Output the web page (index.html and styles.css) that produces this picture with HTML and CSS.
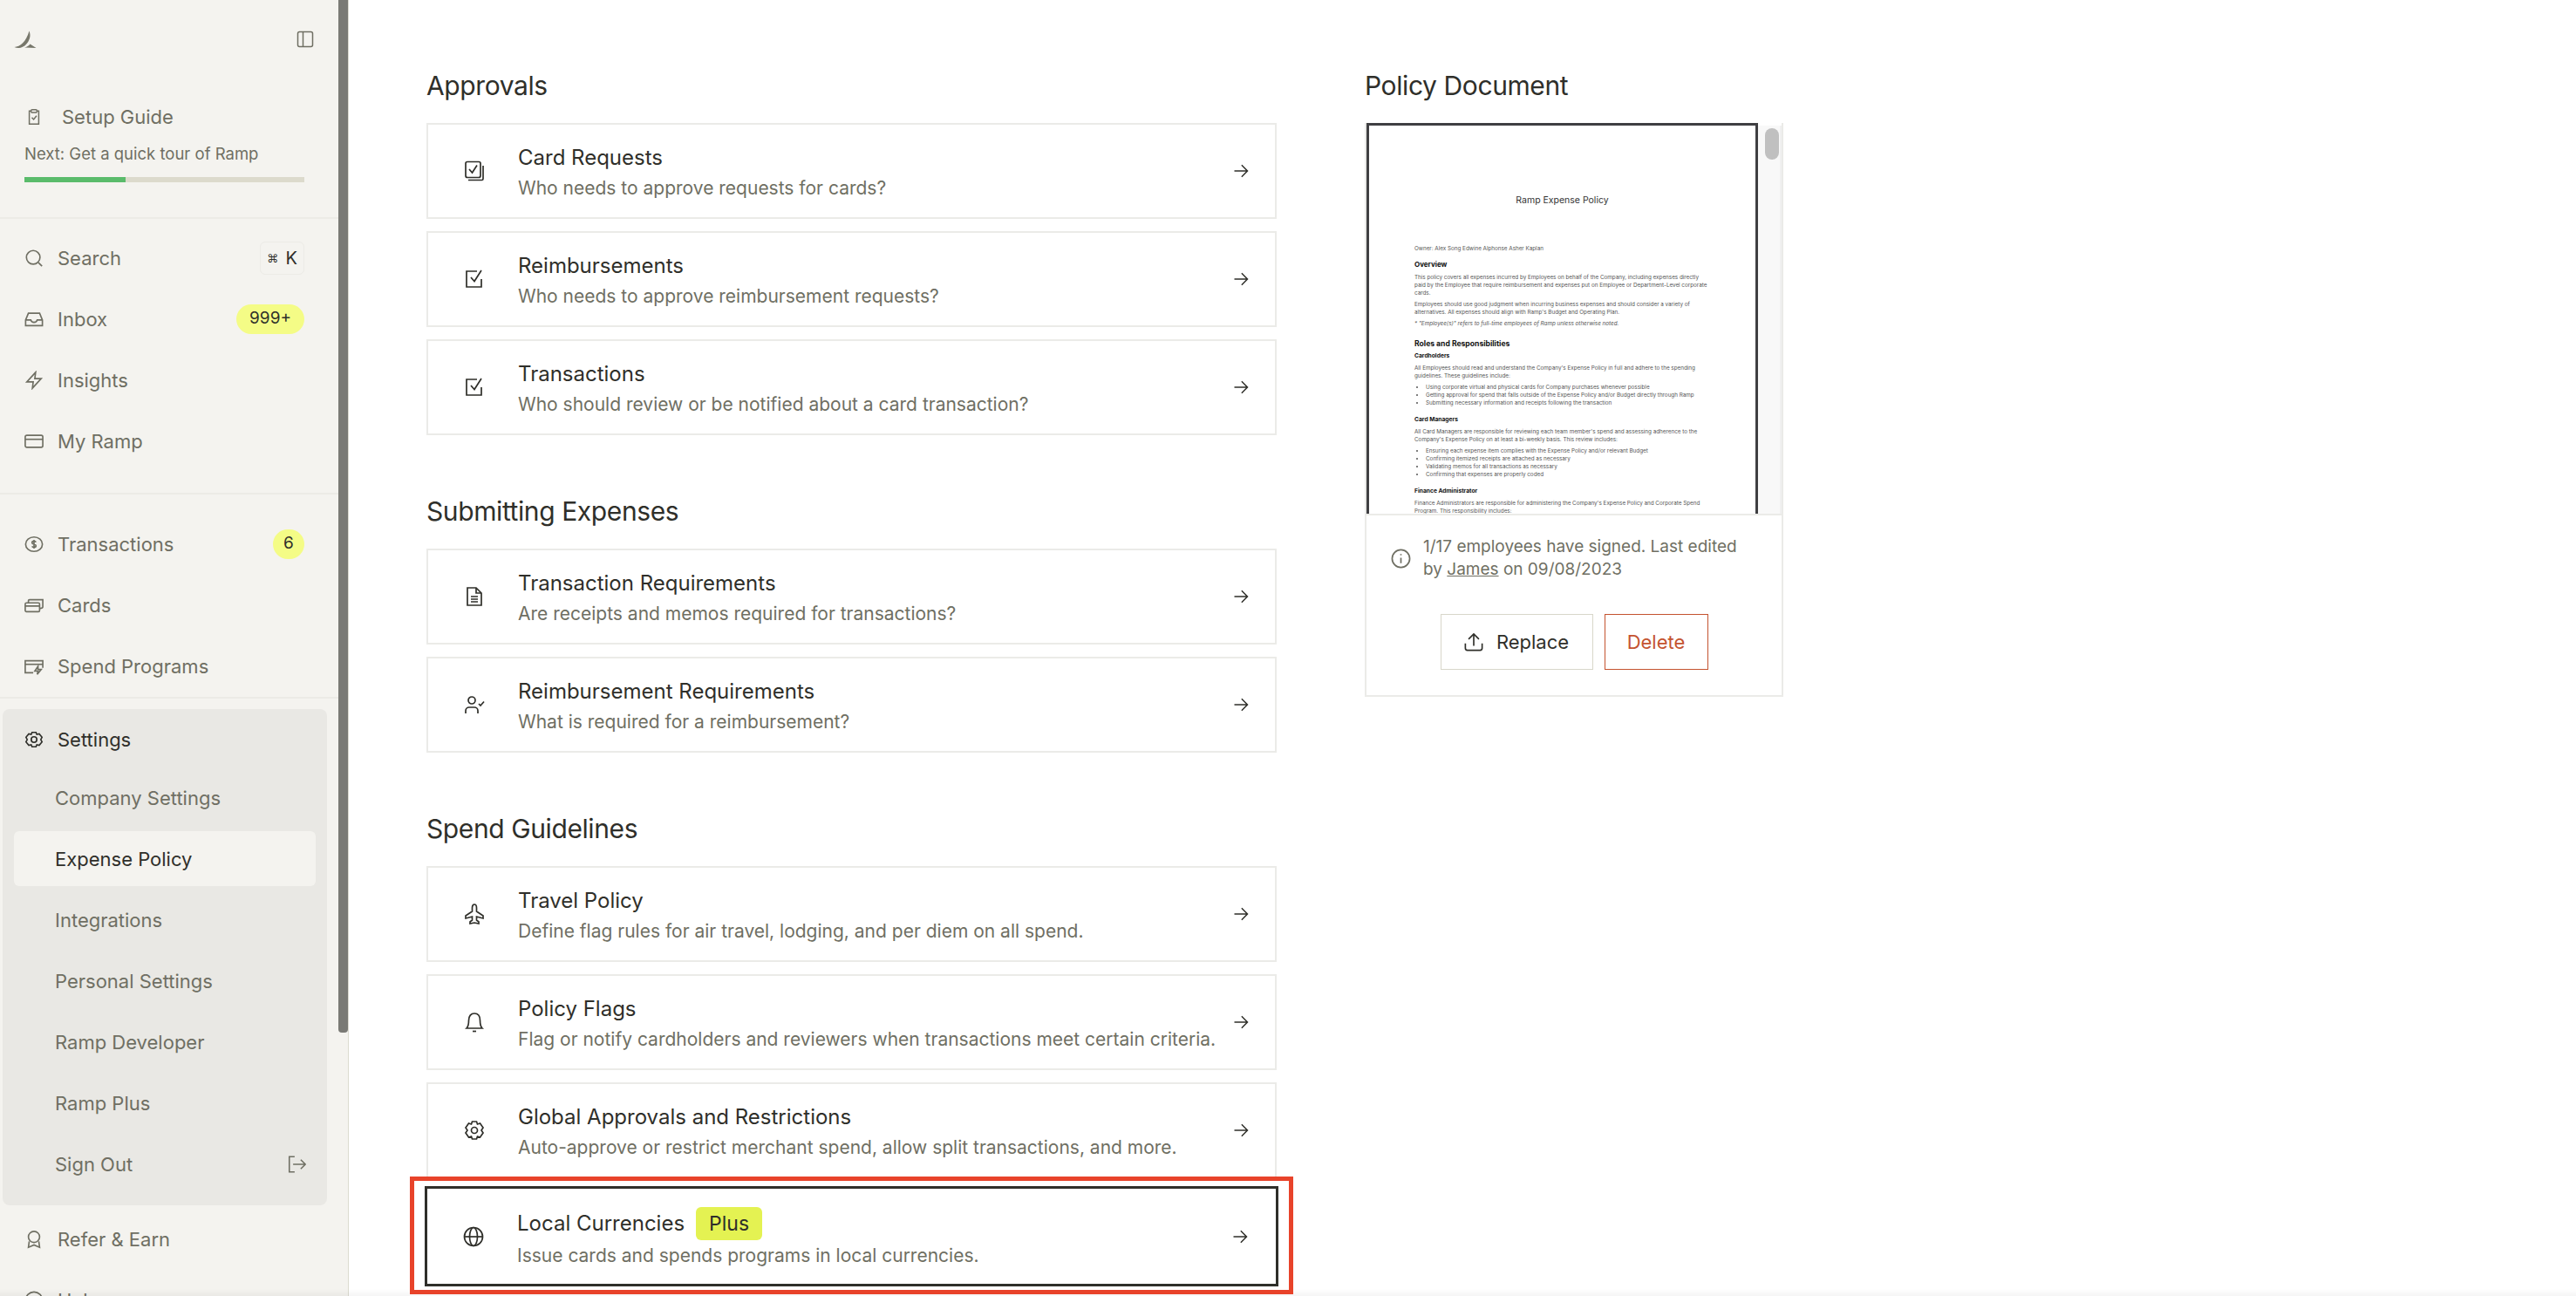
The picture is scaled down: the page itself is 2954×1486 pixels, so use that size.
FILE: index.html
```html
<!DOCTYPE html>
<html lang="en">
<head>
    <meta charset="UTF-8">
    <title>Ramp | Expense Policy</title>
    <link rel="stylesheet" href="styles.css">
</head>
<body>
    <!-- Sidebar -->
    <aside class="sidebar">
        <div class="sidebar-scroll">
            <div class="sidebar-top">
                <svg class="logo" viewBox="0 0 26 22"><path d="M0.5 20C7 19.5 14 14 17.500 1.500C19 5.500 19 9 16.500 13.500C14.500 17 11 20.500 6 21C4 21.200 2 20.800 0.500 20Z" fill="#77776b"/><path d="M12 20.500C14.500 20 17 18.500 18.500 16.500C21 18 23 19.500 25.500 21Z" fill="#77776b"/></svg>
                <svg class="icon collapse-icon" viewBox="0 0 20 20"><rect x="1.500" y="1.500" width="17" height="17" rx="2"/><path d="M7.500 1.500V18.500"/></svg>
            </div>

            <div class="setup">
                <div class="setup-title">
                    <svg class="icon" viewBox="0 0 24 24"><path d="M8 4H5.500V22H18.500V4H16"/><rect x="8" y="2" width="8" height="4" rx="1.500"/><path d="M9 13L11.500 15.500L15.500 10.500"/></svg>
                    <span>Setup Guide</span>
                </div>
                <p class="setup-next">Next: Get a quick tour of Ramp</p>
                <div class="progress"><div class="progress-fill" style="width: 36%"></div></div>
            </div>

            <nav class="nav-group nav-group-first">
                <a class="nav-item">
                    <svg class="icon" viewBox="0 0 24 24"><circle cx="11" cy="11" r="8.500"/><path d="M17.500 17.500L22 22"/></svg>
                    <span>Search</span>
                    <span class="kbd"><span class="kbd-cmd">⌘</span> K</span>
                </a>
                <a class="nav-item">
                    <svg class="icon" viewBox="0 0 24 24"><path d="M1.500 13L5 4.500H19L22.500 13V20H1.500Z"/><path d="M1.500 13H8C8.500 15 10 16 12 16S15.500 15 16 13H22.500"/></svg>
                    <span>Inbox</span>
                    <span class="badge">999+</span>
                </a>
                <a class="nav-item">
                    <svg class="icon" viewBox="0 0 24 24"><path d="M14 2L3 14H11L10 22L21 10H13Z"/></svg>
                    <span>Insights</span>
                </a>
                <a class="nav-item">
                    <svg class="icon" viewBox="0 0 24 24"><rect x="1" y="4.500" width="22" height="15" rx="2"/><path d="M1 9.500H23"/></svg>
                    <span>My Ramp</span>
                </a>
            </nav>

            <nav class="nav-group">
                <a class="nav-item">
                    <svg class="icon" viewBox="0 0 24 24"><ellipse cx="12" cy="12" rx="10.500" ry="9"/><path d="M14.500 9.500C14 8.500 13 8 12 8C10.500 8 9.500 9 9.500 10C9.500 11.200 10.500 11.700 12 12C13.500 12.300 14.500 12.800 14.500 14C14.500 15 13.500 16 12 16C11 16 10 15.500 9.500 14.500M12 6.500V17.500"/></svg>
                    <span>Transactions</span>
                    <span class="badge badge-round">6</span>
                </a>
                <a class="nav-item">
                    <svg class="icon" viewBox="0 0 24 24"><rect x="1" y="9" width="18" height="11" rx="1.500"/><path d="M1 13H19M5 9V6.500C5 5.500 5.500 5 6.500 5H23V14C23 15.500 22 16 19 16"/></svg>
                    <span>Cards</span>
                </a>
                <a class="nav-item">
                    <svg class="icon" viewBox="0 0 24 24"><path d="M11 20H1V5H23V14"/><path d="M1 9.500H23"/><path d="M17 12L13 18H17L16 22L21 16H17Z"/></svg>
                    <span>Spend Programs</span>
                </a>
            </nav>

            <nav class="settings-group">
                <a class="nav-item nav-item-active">
                    <svg class="icon" viewBox="0 0 24 24"><circle cx="12" cy="12" r="3.500"/><path d="M9.500 3H14.500L15.500 5.500L18.500 4.800L22 9L20.500 12L22 15L18.500 19.200L15.500 18.500L14.500 21H9.500L8.500 18.500L5.500 19.200L2 15L3.500 12L2 9L5.500 4.800L8.500 5.500Z"/></svg>
                    <span>Settings</span>
                </a>
                <a class="sub-item">Company Settings</a>
                <a class="sub-item sub-item-current">Expense Policy</a>
                <a class="sub-item">Integrations</a>
                <a class="sub-item">Personal Settings</a>
                <a class="sub-item">Ramp Developer</a>
                <a class="sub-item">Ramp Plus</a>
                <a class="sub-item">
                    <span>Sign Out</span>
                    <svg class="icon signout-icon" viewBox="0 0 24 24"><path d="M9 2H2V22H9"/><path d="M7 12H23M17 6L23 12L17 18"/></svg>
                </a>
            </nav>

            <nav class="nav-group-end">
                <a class="nav-item">
                    <svg class="icon" viewBox="0 0 24 24"><circle cx="12" cy="9" r="7"/><path d="M6 14.500L5 22L12 19L19 22L18 14.500"/></svg>
                    <span>Refer &amp; Earn</span>
                </a>
                <a class="nav-item">
                    <svg class="icon" viewBox="0 0 24 24"><circle cx="12" cy="12" r="10.500"/></svg>
                    <span>Help</span>
                </a>
            </nav>
        </div>
        <div class="scrollbar"><div class="scrollbar-thumb"></div></div>
    </aside>

    <!-- Main Content -->
    <main class="main">
        <div class="policy-col">
            <section class="policy-section">
                <h2 class="section-title">Approvals</h2>
                <div class="card-list">
                    <a class="policy-card">
                        <svg class="icon card-icon" viewBox="0 0 24 24"><rect x="2" y="1.500" width="17" height="18" rx="2"/><path d="M6 10L9.500 14L15 5.500"/><path d="M22 6V21C22 22 21.500 22.500 20.500 22.500H5"/></svg>
                        <div class="card-text">
                            <div class="card-title">Card Requests</div>
                            <div class="card-desc">Who needs to approve requests for cards?</div>
                        </div>
                        <svg class="icon card-arrow" viewBox="0 0 24 24"><path d="M3 12H21M13 4L21 12L13 20"/></svg>
                    </a>
                    <a class="policy-card">
                        <svg class="icon card-icon" viewBox="0 0 24 24"><path d="M20 12V21H3V3H15"/><path d="M8 10L12 14.500L20 2"/></svg>
                        <div class="card-text">
                            <div class="card-title">Reimbursements</div>
                            <div class="card-desc">Who needs to approve reimbursement requests?</div>
                        </div>
                        <svg class="icon card-arrow" viewBox="0 0 24 24"><path d="M3 12H21M13 4L21 12L13 20"/></svg>
                    </a>
                    <a class="policy-card">
                        <svg class="icon card-icon" viewBox="0 0 24 24"><path d="M20 12V21H3V3H15"/><path d="M8 10L12 14.500L20 2"/></svg>
                        <div class="card-text">
                            <div class="card-title">Transactions</div>
                            <div class="card-desc">Who should review or be notified about a card transaction?</div>
                        </div>
                        <svg class="icon card-arrow" viewBox="0 0 24 24"><path d="M3 12H21M13 4L21 12L13 20"/></svg>
                    </a>
                </div>
            </section>

            <section class="policy-section">
                <h2 class="section-title">Submitting Expenses</h2>
                <div class="card-list">
                    <a class="policy-card">
                        <svg class="icon card-icon" viewBox="0 0 24 24"><path d="M4 2H14L20 8V22H4Z"/><path d="M14 2V8H20M8 12H16M8 15H16M8 18H16"/></svg>
                        <div class="card-text">
                            <div class="card-title">Transaction Requirements</div>
                            <div class="card-desc">Are receipts and memos required for transactions?</div>
                        </div>
                        <svg class="icon card-arrow" viewBox="0 0 24 24"><path d="M3 12H21M13 4L21 12L13 20"/></svg>
                    </a>
                    <a class="policy-card">
                        <svg class="icon card-icon" viewBox="0 0 24 24"><circle cx="9" cy="7" r="4"/><path d="M2 22V19C2 16.500 4 15 6 15H12C14 15 16 16.500 16 19V22"/><path d="M17 11L19 13L23 8.500"/></svg>
                        <div class="card-text">
                            <div class="card-title">Reimbursement Requirements</div>
                            <div class="card-desc">What is required for a reimbursement?</div>
                        </div>
                        <svg class="icon card-arrow" viewBox="0 0 24 24"><path d="M3 12H21M13 4L21 12L13 20"/></svg>
                    </a>
                </div>
            </section>

            <section class="policy-section">
                <h2 class="section-title">Spend Guidelines</h2>
                <div class="card-list">
                    <a class="policy-card">
                        <svg class="icon card-icon" viewBox="0 0 24 24"><path d="M12 1C13.500 1 14.500 3 14.500 5V9L22 14V17L14.500 15V19L17 21V23L12 22L7 23V21L9.500 19V15L2 17V14L9.500 9V5C9.500 3 10.500 1 12 1Z"/></svg>
                        <div class="card-text">
                            <div class="card-title">Travel Policy</div>
                            <div class="card-desc">Define flag rules for air travel, lodging, and per diem on all spend.</div>
                        </div>
                        <svg class="icon card-arrow" viewBox="0 0 24 24"><path d="M3 12H21M13 4L21 12L13 20"/></svg>
                    </a>
                    <a class="policy-card">
                        <svg class="icon card-icon" viewBox="0 0 24 24"><path d="M3 19C5 17 5.500 14 5.500 10C5.500 5 8 2 12 2S18.500 5 18.500 10C18.500 14 19 17 21 19Z"/><path d="M10 22.500H14"/></svg>
                        <div class="card-text">
                            <div class="card-title">Policy Flags</div>
                            <div class="card-desc">Flag or notify cardholders and reviewers when transactions meet certain criteria.</div>
                        </div>
                        <svg class="icon card-arrow" viewBox="0 0 24 24"><path d="M3 12H21M13 4L21 12L13 20"/></svg>
                    </a>
                    <a class="policy-card">
                        <svg class="icon card-icon" viewBox="0 0 24 24"><circle cx="12" cy="12" r="3.500"/><path d="M9.500 2H14.500L15.500 5L18.500 4L22 9L20 12L22 15L18.500 20L15.500 19L14.500 22H9.500L8.500 19L5.500 20L2 15L4 12L2 9L5.500 4L8.500 5Z"/></svg>
                        <div class="card-text">
                            <div class="card-title">Global Approvals and Restrictions</div>
                            <div class="card-desc">Auto-approve or restrict merchant spend, allow split transactions, and more.</div>
                        </div>
                        <svg class="icon card-arrow" viewBox="0 0 24 24"><path d="M3 12H21M13 4L21 12L13 20"/></svg>
                    </a>
                    <a class="policy-card policy-card-focus">
                        <svg class="icon card-icon" viewBox="0 0 24 24"><circle cx="12" cy="12" r="10.500"/><ellipse cx="12" cy="12" rx="4.500" ry="10.500"/><path d="M1.500 12H22.500"/></svg>
                        <div class="card-text">
                            <div class="card-title">Local Currencies <span class="plus-tag">Plus</span></div>
                            <div class="card-desc">Issue cards and spends programs in local currencies.</div>
                        </div>
                        <svg class="icon card-arrow" viewBox="0 0 24 24"><path d="M3 12H21M13 4L21 12L13 20"/></svg>
                    </a>
                </div>
            </section>
        </div>

        <section class="doc-col">
            <h2 class="section-title">Policy Document</h2>
            <div class="doc-card">
                <div class="doc-viewer">
                    <div class="doc-page">
                        <h3 class="doc-title">Ramp Expense Policy</h3>
                        <p class="doc-owner">Owner: Alex Song Edwine Alphonse Asher Kaplan</p>
                        <h4 class="doc-h1">Overview</h4>
                        <p>This policy covers all expenses incurred by Employees on behalf of the Company, including expenses directly paid by the Employee that require reimbursement and expenses put on Employee or Department-Level corporate cards.</p>
                        <p>Employees should use good judgment when incurring business expenses and should consider a variety of alternatives. All expenses should align with Ramp's Budget and Operating Plan.</p>
                        <p class="doc-note">* "Employee(s)" refers to full-time employees of Ramp unless otherwise noted.</p>
                        <h4 class="doc-h1 doc-h1-large">Roles and Responsibilities</h4>
                        <h5 class="doc-h2">Cardholders</h5>
                        <p>All Employees should read and understand the Company's Expense Policy in full and adhere to the spending guidelines. These guidelines include:</p>
                        <ul>
                            <li>Using corporate virtual and physical cards for Company purchases whenever possible</li>
                            <li>Getting approval for spend that falls outside of the Expense Policy and/or Budget directly through Ramp</li>
                            <li>Submitting necessary information and receipts following the transaction</li>
                        </ul>
                        <h5 class="doc-h2">Card Managers</h5>
                        <p>All Card Managers are responsible for reviewing each team member's spend and assessing adherence to the Company's Expense Policy on at least a bi-weekly basis. This review includes:</p>
                        <ul>
                            <li>Ensuring each expense item complies with the Expense Policy and/or relevant Budget</li>
                            <li>Confirming itemized receipts are attached as necessary</li>
                            <li>Validating memos for all transactions as necessary</li>
                            <li>Confirming that expenses are properly coded</li>
                        </ul>
                        <h5 class="doc-h2">Finance Administrator</h5>
                        <p>Finance Administrators are responsible for administering the Company's Expense Policy and Corporate Spend Program. This responsibility includes:</p>
                    </div>
                    <div class="doc-scroll"><div class="doc-thumb"></div></div>
                </div>
                <div class="doc-footer">
                    <div class="doc-info">
                        <svg class="icon info-icon" viewBox="0 0 24 24"><circle cx="12" cy="12" r="10.500"/><path d="M12 11V17.500"/><path d="M12 6.500V8"/></svg>
                        <p>1/17 employees have signed. Last edited by <a class="doc-link">James</a> on 09/08/2023</p>
                    </div>
                    <div class="doc-actions">
                        <button class="btn">
                            <svg class="icon upload-icon" viewBox="0 0 24 24"><path d="M1.500 14V20C1.500 21.500 2.500 22.500 4 22.500H20C21.500 22.500 22.500 21.500 22.500 20V14"/><path d="M12 17V2M5.500 8.500L12 2L18.500 8.500"/></svg>
                            Replace
                        </button>
                        <button class="btn btn-danger">Delete</button>
                    </div>
                </div>
            </div>
        </section>
    </main>

    <div class="bottom-fade"></div>
</body>
</html>
```

FILE: styles.css
```css
* {
    box-sizing: border-box;
    margin: 0;
    padding: 0;
    font-family: Inter, "Liberation Sans", sans-serif;
}

html, body {
    height: 100%;
    overflow: hidden;
}

body {
    display: flex;
    background: white;
    color: #2f2f2a;
}

.icon {
    display: block;
    flex: none;
    width: 22px;
    height: 22px;
    fill: none;
    stroke: #6f6f63;
    stroke-width: 1.8;
}

/* Sidebar */
.sidebar {
    display: flex;
    flex: none;
    width: 400px;
    height: 100%;
    background: #f4f3ef;
    border-right: 1px solid #dcdbd0;
}

.sidebar-scroll {
    width: 388px;
    overflow: hidden;
}

.scrollbar {
    width: 11px;
}

.scrollbar-thumb {
    height: 1184px;
    background: #7a7a75;
    border-radius: 0 0 4px 4px;
}

.sidebar-top {
    display: flex;
    justify-content: space-between;
    align-items: center;
    height: 44px;
    margin-top: 23px;
    padding: 0 28px 0 16px;
}

.logo {
    width: 26px;
    height: 22px;
}

.collapse-icon {
    width: 20px;
    height: 20px;
    stroke-width: 1.5;
}

.setup {
    height: 184px;
    padding: 47px 39px 0 28px;
    border-bottom: 2px solid #ecebe6;
}

.setup-title {
    display: flex;
    align-items: center;
    gap: 22px;
    height: 40px;
    padding-left: 1px;
    font-size: 22px;
    color: #6f6f63;
}

.setup-title .icon {
    width: 20px;
}

.setup-next {
    margin-top: 10px;
    font-size: 18.5px;
    line-height: 24px;
    color: #6f6f63;
}

.progress {
    height: 6px;
    margin-top: 15px;
    background: #dcdacc;
}

.progress-fill {
    height: 100%;
    background: #5abb6b;
}

.nav-group {
    padding: 22px 0 0;
    border-bottom: 2px solid #ecebe6;
}

.nav-group-first {
    padding: 10px 0 24px;
}

.nav-item {
    display: flex;
    align-items: center;
    gap: 16px;
    height: 70px;
    padding: 0 39px 0 28px;
    font-size: 22px;
    color: #6f6f63;
}

.nav-item .badge, .nav-item .kbd {
    margin-left: auto;
}

.kbd {
    display: flex;
    justify-content: space-between;
    align-items: center;
    width: 51px;
    height: 38px;
    padding: 0 7px;
    border: 1px solid #ecebe6;
    border-radius: 6px;
    font-size: 20px;
    color: #2f2f2a;
}

.kbd-cmd {
    font-family: "DejaVu Sans", sans-serif;
    font-size: 13px;
}

.badge {
    padding: 0 15px;
    height: 34px;
    line-height: 32px;
    border-radius: 17px;
    background: #f4fc86;
    font-size: 19px;
    color: #2f2f2a;
}

.badge-round {
    width: 36px;
    height: 34px;
    padding: 0;
    text-align: center;
}

.settings-group {
    width: 372px;
    margin: 12px 0 0 3px;
    padding: 0 13px;
    height: 569px;
    background: #e9e8e4;
    border-radius: 8px;
}

.settings-group .nav-item {
    margin: 0 -13px;
    padding-left: 25px;
}

.nav-item-active {
    color: #2f2f2a;
}

.nav-item-active .icon {
    stroke: #2f2f2a;
}

.sub-item {
    display: flex;
    justify-content: space-between;
    align-items: center;
    height: 63px;
    margin-bottom: 7px;
    padding: 0 11px 0 47px;
    border-radius: 6px;
    font-size: 22px;
    color: #6f6f63;
}

.sub-item-current {
    background: #f4f3ef;
    color: #2f2f2a;
}

.signout-icon {
    width: 21px;
}

.nav-group-end {
    margin-top: 4px;
}

/* Main */
.main {
    display: flex;
    gap: 101px;
    flex: 1;
    padding: 78px 0 0 89px;
}

.policy-col {
    width: 975px;
}

.policy-section {
    margin-bottom: 67px;
}

.section-title {
    height: 40px;
    margin-bottom: 23px;
    font-size: 30px;
    font-weight: 400;
    line-height: 40px;
    letter-spacing: -0.4px;
    color: #2f2f2a;
}

.card-list {
    display: flex;
    flex-direction: column;
    gap: 14px;
}

.policy-card {
    display: flex;
    align-items: center;
    height: 110px;
    padding: 0 29px 0 41px;
    background: white;
    border: 2px solid #ebebe8;
}

.card-icon {
    width: 24px;
    height: 24px;
    stroke-width: 1.7;
    stroke: #2f2f2a;
}

.card-text {
    flex: 1;
    padding: 5px 0 0 38px;
}

.card-title {
    display: flex;
    align-items: center;
    gap: 13px;
    font-size: 24px;
    line-height: 34px;
    color: #2f2f2a;
}

.card-desc {
    margin-top: 1px;
    font-size: 21px;
    line-height: 34px;
    color: #6f6f63;
}

.card-arrow {
    width: 20px;
    height: 20px;
    stroke: #2f2f2a;
}

.policy-card-focus {
    position: relative;
    height: 115px;
    margin: -5px -2px 0;
    padding: 0 31px 0 41px;
    border: 3px solid #2f2f2a;
    outline: 0;
}

/* red annotation box */
.policy-card-focus::before {
    content: "";
    position: absolute;
    top: -14px;
    left: -20px;
    right: -20px;
    bottom: -12px;
    border: 5px solid #e8432a;
    z-index: 1;
    pointer-events: none;
}

.plus-tag {
    padding: 0 15px;
    height: 38px;
    line-height: 38px;
    border-radius: 6px;
    background: #e4f252;
    font-size: 23px;
}

/* Policy document */
.doc-col {
    width: 480px;
}

.doc-card {
    border: 2px solid #ebebe8;
    border-top: 0;
}

.doc-viewer {
    display: flex;
    height: 450px;
    overflow: hidden;
    border-bottom: 2px solid #ebebe8;
}

.doc-page {
    width: 449px;
    padding: 79px 52px 0;
    border: solid #3f3f42;
    border-width: 3px 3px 0;
    font-size: 6.3px;
    line-height: 9px;
    color: #555;
}

.doc-page p {
    margin-bottom: 4px;
}

.doc-title {
    font-size: 10.500px;
    font-weight: 400;
    line-height: 14px;
    text-align: center;
    color: #333;
    margin-bottom: 44px;
}

.doc-owner {
    margin-bottom: 7px !important;
}

.doc-h1 {
    font-size: 8px;
    line-height: 12px;
    color: #111;
    margin-bottom: 5px;
}

.doc-h1-large {
    font-size: 8.600px;
    margin-top: 12px;
    margin-bottom: 3px;
}

.doc-h2 {
    font-size: 6.700px;
    line-height: 10px;
    color: #111;
    margin: 0 0 5px;
}

.doc-note {
    font-style: italic;
}

.doc-page ul {
    list-style: disc;
    margin: 0 0 9px 13px;
}

.doc-scroll {
    flex: 1;
    margin-top: 3px;
    padding-top: 3px;
    background: #f8f8f8;
    border-right: 2px solid #f0f0f0;
}

.doc-thumb {
    width: 16px;
    height: 36px;
    margin-left: 8px;
    border-radius: 8px;
    background: #c0c0c0;
}

.doc-footer {
    height: 206px;
    padding: 23px 37px 0 28px;
}

.doc-info {
    display: flex;
    align-items: center;
    gap: 14px;
}

.info-icon {
    width: 23px;
    height: 23px;
    stroke-width: 1.8;
}

.doc-info p {
    font-size: 19px;
    line-height: 26px;
    color: #6f6f63;
}

.doc-link {
    text-decoration: underline;
}

.doc-actions {
    display: flex;
    justify-content: center;
    gap: 13px;
    margin-top: 38px;
    margin-left: 9px;
}

.btn {
    display: flex;
    justify-content: center;
    align-items: center;
    gap: 15px;
    width: 175px;
    height: 64px;
    background: white;
    border: 1.500px solid #d8d7ca;
    font-size: 22px;
    color: #2f2f2a;
}

.upload-icon {
    stroke: #2f2f2a;
}

.btn-danger {
    width: 119px;
    border-color: #c4532f;
    color: #c4532f;
}

.bottom-fade {
    position: fixed;
    left: 0;
    right: 0;
    bottom: 0;
    height: 8px;
    background: linear-gradient(rgba(0, 0, 0, 0), rgba(0, 0, 0, 0.04));
}
```
